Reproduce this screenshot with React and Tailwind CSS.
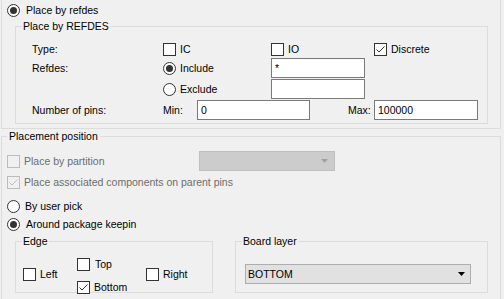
import React from 'react';

const Radio = ({ checked }) => (
  <span className="w-[13px] h-[13px] shrink-0 rounded-full border border-[#333333] bg-white flex items-center justify-center">
    {checked && <span className="w-[7px] h-[7px] rounded-full bg-[#333333]" />}
  </span>
);

const Check = ({ checked, disabled }) => (
  <span
    className={`w-[13px] h-[13px] shrink-0 border flex items-center justify-center ${
      disabled ? 'border-[#bcbcbc] bg-[#f0f0f0]' : 'border-[#333333] bg-white'
    }`}
  >
    {checked && (
      <svg width="11" height="11" viewBox="0 0 11 11">
        <path
          d="M1.5 5.5 L4 8 L9.5 2.5"
          fill="none"
          stroke={disabled ? '#bcbcbc' : '#333333'}
          strokeWidth="1"
        />
      </svg>
    )}
  </span>
);

const Field = ({ value, className }) => (
  <input
    readOnly
    value={value}
    className={`h-[20px] border border-[#7a7a7a] bg-white px-[3px] text-[10.5px] leading-[13px] text-black outline-none ${className}`}
  />
);

const Arrow = ({ color }) => (
  <svg width="7" height="4" viewBox="0 0 7 4">
    <path d="M0 0 H7 L3.5 4 Z" fill={color} />
  </svg>
);

export default function App() {
  return (
    <div className="w-[504px] h-[299px] overflow-hidden bg-[#f0f0f0] text-black font-['Liberation_Sans',Arial,sans-serif] text-[10.5px] leading-[13px]">
      {/* Place by refdes */}
      <div className="ml-[1px] w-[500px] border-x border-b border-[#dcdcdc] pl-[5px] pt-[4px] pb-[4px]">
        <label className="flex items-center gap-[6px] h-[13px]">
          <Radio checked />
          Place by refdes
        </label>

        <fieldset className="ml-[8px] mt-[3px] w-[473px] border border-[#dcdcdc]">
          <legend className="ml-[6px] px-[1px]">Place by REFDES</legend>
          <div className="pl-[16px] pt-[10px] pb-[3px]">
            <div className="flex items-center h-[13px]">
              <span className="w-[131px]">Type:</span>
              <label className="w-[108px] flex items-center gap-[4px]">
                <Check />
                IC
              </label>
              <label className="w-[103px] flex items-center gap-[4px]">
                <Check />
                IO
              </label>
              <label className="flex items-center gap-[4px]">
                <Check checked />
                Discrete
              </label>
            </div>

            <div className="mt-[2px] flex items-center h-[20px]">
              <span className="w-[131px]">Refdes:</span>
              <label className="w-[108px] flex items-center gap-[4px]">
                <Radio checked />
                Include
              </label>
              <Field value="*" className="w-[94px]" />
            </div>

            <div className="mt-[1px] flex items-center h-[20px]">
              <span className="w-[131px]" />
              <label className="w-[108px] flex items-center gap-[4px]">
                <Radio />
                Exclude
              </label>
              <Field value="" className="w-[94px]" />
            </div>

            <div className="mt-[1px] flex items-center h-[20px]">
              <span className="w-[131px]">Number of pins:</span>
              <span className="w-[34px]">Min:</span>
              <Field value="0" className="w-[113px]" />
              <span className="ml-[38px] w-[26px]">Max:</span>
              <Field value="100000" className="w-[104px]" />
            </div>
          </div>
        </fieldset>
      </div>

      {/* Placement position */}
      <fieldset className="ml-[1px] mt-[1px] w-[500px] h-[200px] border border-[#dcdcdc]">
        <legend className="ml-[5px] px-[2px]">Placement position</legend>
        <div className="pl-[5px] pt-[8px]">
          <div className="flex items-center h-[20px]">
            <label className="w-[192px] flex items-center gap-[4px] text-[#6d6d6d]">
              <Check disabled />
              Place by partition
            </label>
            <div className="w-[136px] h-[20px] bg-[#cccccc] border border-[#bfbfbf] flex items-center justify-end pr-[6px]">
              <Arrow color="#a0a0a0" />
            </div>
          </div>

          <label className="mt-[5px] flex items-center gap-[4px] h-[13px] text-[#6d6d6d]">
            <Check checked disabled />
            Place associated components on parent pins
          </label>

          <label className="mt-[11px] flex items-center gap-[5px] h-[13px]">
            <Radio />
            By user pick
          </label>

          <label className="mt-[5px] flex items-center gap-[6px] h-[13px]">
            <Radio checked />
            Around package keepin
          </label>

          <div className="mt-[4px] flex">
            <fieldset className="ml-[8px] w-[198px] h-[58px] border border-[#dcdcdc]">
              <legend className="ml-[6px] px-[1px]">Edge</legend>
              <div className="flex items-start pl-[7px] pt-[10px]">
                <label className="mt-[10px] w-[54px] flex items-center gap-[4px] h-[13px]">
                  <Check />
                  Left
                </label>
                <div className="w-[69px]">
                  <label className="flex items-center gap-[5px] h-[13px]">
                    <Check />
                    Top
                  </label>
                  <label className="mt-[10px] flex items-center gap-[4px] h-[13px]">
                    <Check checked />
                    Bottom
                  </label>
                </div>
                <label className="mt-[10px] flex items-center gap-[4px] h-[13px]">
                  <Check />
                  Right
                </label>
              </div>
            </fieldset>

            <fieldset className="ml-[22px] w-[253px] h-[58px] border border-[#dcdcdc]">
              <legend className="ml-[6px] px-[1px]">Board layer</legend>
              <div className="pl-[9px] pt-[16px]">
                <div className="w-[226px] h-[20px] bg-[#e1e1e1] border border-[#adadad] flex items-center justify-between pl-[2px] pr-[5px]">
                  <span>BOTTOM</span>
                  <Arrow color="#000000" />
                </div>
              </div>
            </fieldset>
          </div>
        </div>
      </fieldset>
    </div>
  );
}
